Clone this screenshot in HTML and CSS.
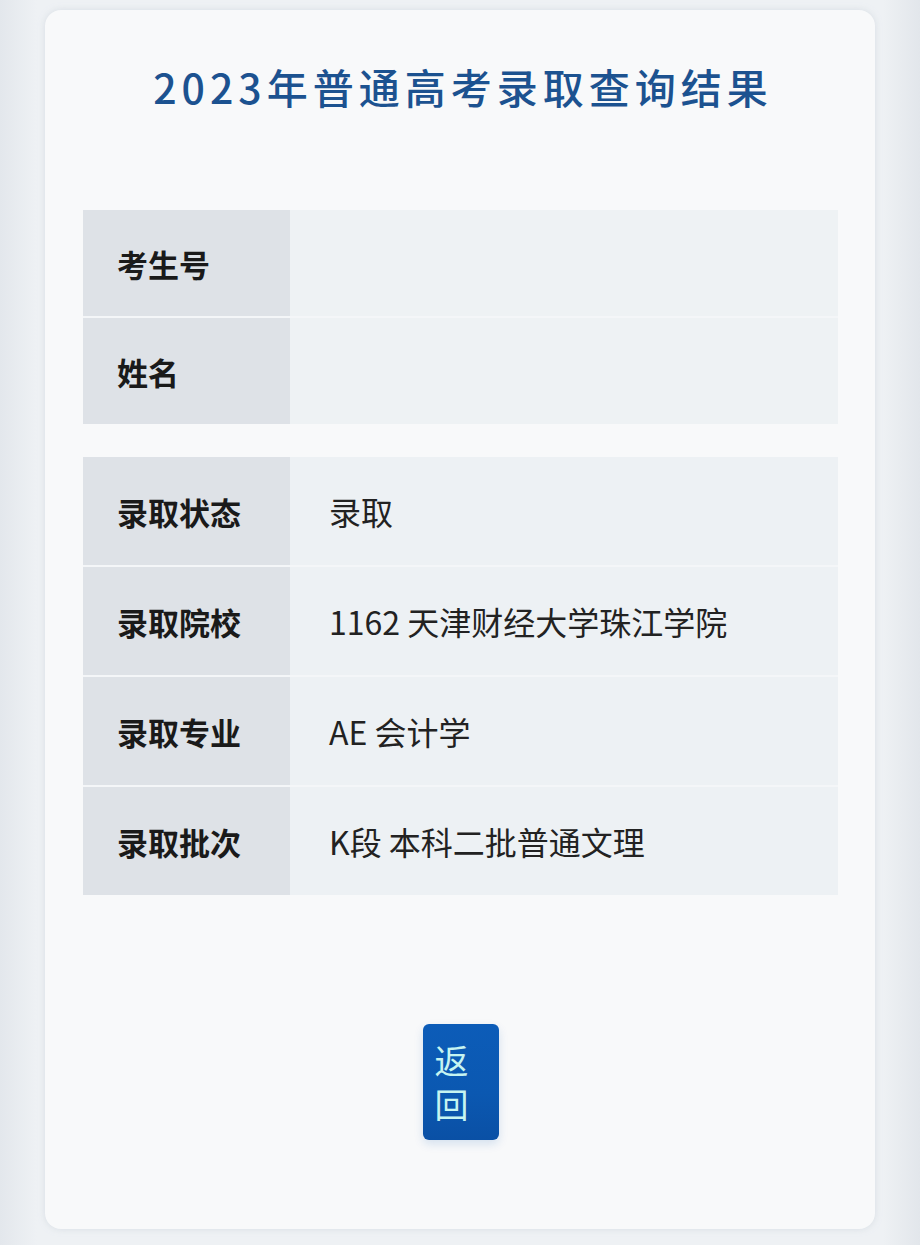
FILE: index.html
```html
<!DOCTYPE html>
<html lang="zh-CN">
<head>
<meta charset="utf-8">
<title>2023年普通高考录取查询结果</title>
<link rel="stylesheet" href="styles.css">
</head>
<body>
<div class="page">
  <div class="card">
    <h1 class="title">2023年普通高考录取查询结果</h1>

    <div class="table table-first">
      <div class="row"><div class="label">考生号</div><div class="value"></div></div>
      <div class="row"><div class="label">姓名</div><div class="value"></div></div>
    </div>

    <div class="table table-second">
      <div class="row"><div class="label">录取状态</div><div class="value">录取</div></div>
      <div class="row"><div class="label">录取院校</div><div class="value">1162 天津财经大学珠江学院</div></div>
      <div class="row"><div class="label">录取专业</div><div class="value">AE 会计学</div></div>
      <div class="row"><div class="label">录取批次</div><div class="value">K段 本科二批普通文理</div></div>
    </div>

    <div class="actions">
      <button class="back-btn" type="button">返回</button>
    </div>
  </div>
</div>
</body>
</html>
```

FILE: styles.css
```css
* { box-sizing: border-box; }

html, body {
  margin: 0;
  padding: 0;
  background: #e6eaee;
}

body {
  font-family: "Noto Sans CJK SC", "Noto Sans", sans-serif;
  color: #1b1b1b;
}

.page {
  width: 920px;
  height: 1245px;
  padding: 10px 45px 15px 45px;
  background: linear-gradient(90deg, #e3e7ec 0%, #eef1f4 4%, #eef1f4 96%, #e2e6eb 100%);
}

.card {
  height: 1219px;
  background: #f8f9fa;
  border-radius: 16px;
  padding: 51px 37px 0 38px;
  box-shadow: 0 0 6px rgba(200, 208, 216, 0.6);
}

.title {
  margin: 0 0 99px 0;
  text-align: center;
  font-size: 41px;
  line-height: 50px;
  font-weight: 500;
  letter-spacing: 5px;
  padding-left: 5px;
  color: #1c5290;
}

.table {
  display: flex;
  flex-direction: column;
  gap: 2px;
  background: #f4f6f8;
}

.table-first {
  margin-bottom: 33px;
}

.row {
  display: grid;
  grid-template-columns: 207px 1fr;
}

.table-first .row { height: 106px; }
.table-second .row { height: 108px; }

.label {
  display: flex;
  align-items: center;
  padding-left: 34px;
  background: #dee2e7;
  font-size: 31px;
  font-weight: 700;
  color: #1a1a1a;
}

.value {
  display: flex;
  align-items: center;
  padding-left: 39px;
  background: #edf1f4;
  font-size: 32px;
  font-weight: 400;
  color: #222;
}

.table-first .value { background: #eef2f4; }

.actions {
  display: flex;
  justify-content: center;
  margin-top: 129px;
}

.back-btn {
  width: 76px;
  height: 116px;
  border: none;
  border-radius: 6px;
  background: linear-gradient(180deg, #0c5cb8 0%, #0b58b1 60%, #0a50a5 100%);
  color: #c6f4f1;
  font-family: "Noto Sans CJK SC", sans-serif;
  font-size: 34px;
  font-weight: 400;
  line-height: 44px;
  text-align: left;
  padding: 0 28px 0 12px;
  word-break: break-all;
  box-shadow: 0 4px 10px rgba(11, 88, 177, 0.15);
}
```
